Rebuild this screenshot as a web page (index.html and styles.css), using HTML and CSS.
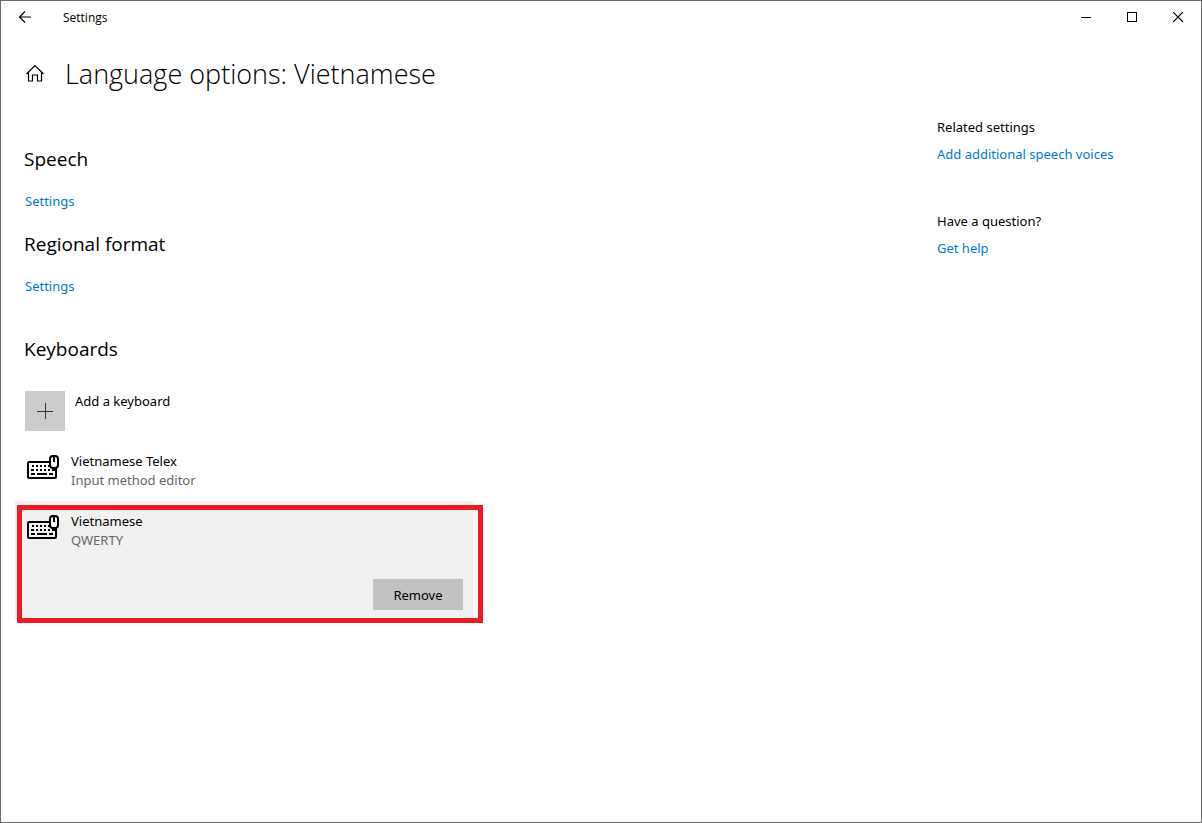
FILE: index.html
```html
<!DOCTYPE html>
<html lang="en">
<head>
<meta charset="utf-8">
<title>Settings</title>
<link rel="stylesheet" href="styles.css">
</head>
<body>
<svg class="defs" aria-hidden="true">
  <symbol id="keyboard" viewBox="0 0 34 26">
    <rect x="2" y="8" width="28" height="16" rx="1" fill="none" stroke="#000" stroke-width="2"/>
    <path d="M6 12h2m2 0h2m2 0h2m2 0h2m2 0h2M5 16h3m2 0h2m2 0h2m2 0h2m2 0h2m2 0h3M5 20h4m2 0h10m2 0h4" fill="none" stroke="#000" stroke-width="2"/>
    <rect class="mouse" x="24" y="2" width="8" height="12" rx="3" stroke="#000" stroke-width="2"/>
    <path d="M28 2v6" stroke="#000" stroke-width="2"/>
  </symbol>
</svg>
<div class="window">
  <header class="titlebar">
    <button class="back" aria-label="Back"><svg width="14" height="12" viewBox="0 0 14 12"><path d="M7 .5L1.500 6l5.500 5.500M1.500 6H13" fill="none" stroke="#000" stroke-width="1.200"/></svg></button>
    <span class="app-name">Settings</span>
    <div class="controls">
      <button aria-label="Minimize"><svg width="11" height="11"><path d="M0 5.500h10" stroke="#000"/></svg></button>
      <button aria-label="Maximize"><svg width="11" height="11"><rect x=".5" y=".5" width="9" height="9" fill="none" stroke="#000"/></svg></button>
      <button aria-label="Close"><svg width="11" height="11"><path d="M0 0l10 10M10 0L0 10" stroke="#000" stroke-width="1.100"/></svg></button>
    </div>
  </header>
  <div class="page-head">
    <button class="home" aria-label="Home"><svg width="20" height="20" viewBox="0 0 20 20"><path d="M1.500 10L10 1.500l8.500 8.500M3.500 8.500V17h4v-6h5v6h4V8.500" fill="none" stroke="#000" stroke-width="1.200"/></svg></button>
    <h1>Language options: Vietnamese</h1>
  </div>
  <div class="columns">
    <main>
      <section>
        <h2>Speech</h2>
        <a href="#">Settings</a>
      </section>
      <section>
        <h2>Regional format</h2>
        <a href="#">Settings</a>
      </section>
      <section class="keyboards">
        <h2>Keyboards</h2>
        <button class="add"><span class="plus"><svg width="16" height="16"><path d="M0 8.500h16M8.500 0v16" stroke="#333"/></svg></span><span class="add-label">Add a keyboard</span></button>
        <ul>
          <li class="item">
            <svg class="kb" width="34" height="26"><use href="#keyboard"/></svg>
            <div><div class="name">Vietnamese Telex</div><div class="kind">Input method editor</div></div>
          </li>
          <li class="item selected">
            <svg class="kb" width="34" height="26"><use href="#keyboard"/></svg>
            <div><div class="name">Vietnamese</div><div class="kind">QWERTY</div></div>
            <button class="remove">Remove</button>
            <div class="highlight"></div>
          </li>
        </ul>
      </section>
    </main>
    <aside>
      <section>
        <h3>Related settings</h3>
        <a href="#">Add additional speech voices</a>
      </section>
      <section>
        <h3>Have a question?</h3>
        <a href="#">Get help</a>
      </section>
    </aside>
  </div>
</div>
</body>
</html>
```
FILE: styles.css
```css
* { box-sizing: border-box; }
body {
  margin: 0;
  background: #fff;
  color: #000;
  font: 13px/19px "Noto Sans", "Open Sans", sans-serif;
}
h1, h2, h3, ul { margin: 0; padding: 0; font-weight: 400; }
button { margin: 0; padding: 0; border: 0; background: none; color: inherit; font: inherit; }
svg { display: block; flex: none; }
a { color: #0078d7; text-decoration: none; }
.defs { position: absolute; width: 0; height: 0; }
.window { min-height: 100vh; border: 1px solid #6b6b6b; }
.titlebar { display: flex; align-items: center; height: 32px; }
.back { display: grid; place-items: center; width: 48px; height: 32px; }
.app-name { margin-left: 14px; font: 12px/19px "Open Sans", sans-serif; }
.controls { display: flex; margin-left: auto; }
.controls button { display: grid; place-items: center; width: 46px; height: 32px; }
.page-head { display: flex; align-items: center; gap: 20px; padding: 23px 24px 0; }
.home { width: 20px; height: 20px; }
h1 { font: 300 27px/36px "Open Sans", sans-serif; }
.columns { display: grid; grid-template-columns: 1fr 264px; }
main { padding: 53px 24px 0 23px; }
main section { margin-bottom: 19px; }
h2 { margin-bottom: 18px; font: 19px/28px "Open Sans", sans-serif; }
main section > a { display: block; padding-left: 1px; line-height: 20px; }
main .keyboards { margin-top: 39px; }
.keyboards h2 { margin-bottom: 28px; }
.add { display: flex; gap: 10px; margin-left: 1px; text-align: left; }
.add-label { padding-top: 1px; }
.plus { display: grid; place-items: center; width: 40px; height: 40px; background: #ccc; }
ul { max-width: 458px; margin: 10px 0 0 -9px; list-style: none; }
.item { position: relative; display: flex; gap: 11px; min-height: 60px; padding: 11px 10px 10px 11px; }
.mouse { fill: #fff; }
.kb { margin-top: 2px; }
.kind { color: #666; }
.selected { min-height: 119px; background: #f1f1f1; }
.selected .mouse { fill: #f1f1f1; }
.remove { align-self: flex-end; width: 90px; height: 31px; padding-top: 1px; margin-left: auto; background: #c2c2c2; }
.highlight { position: absolute; top: 4px; right: -10px; bottom: -3px; left: 2px; border: 5px solid #ed1c24; }
aside { padding: 26px 24px 0 0; }
aside section { margin-bottom: 48px; }
h3 { margin-bottom: 8px; font-size: 13px; }
```
